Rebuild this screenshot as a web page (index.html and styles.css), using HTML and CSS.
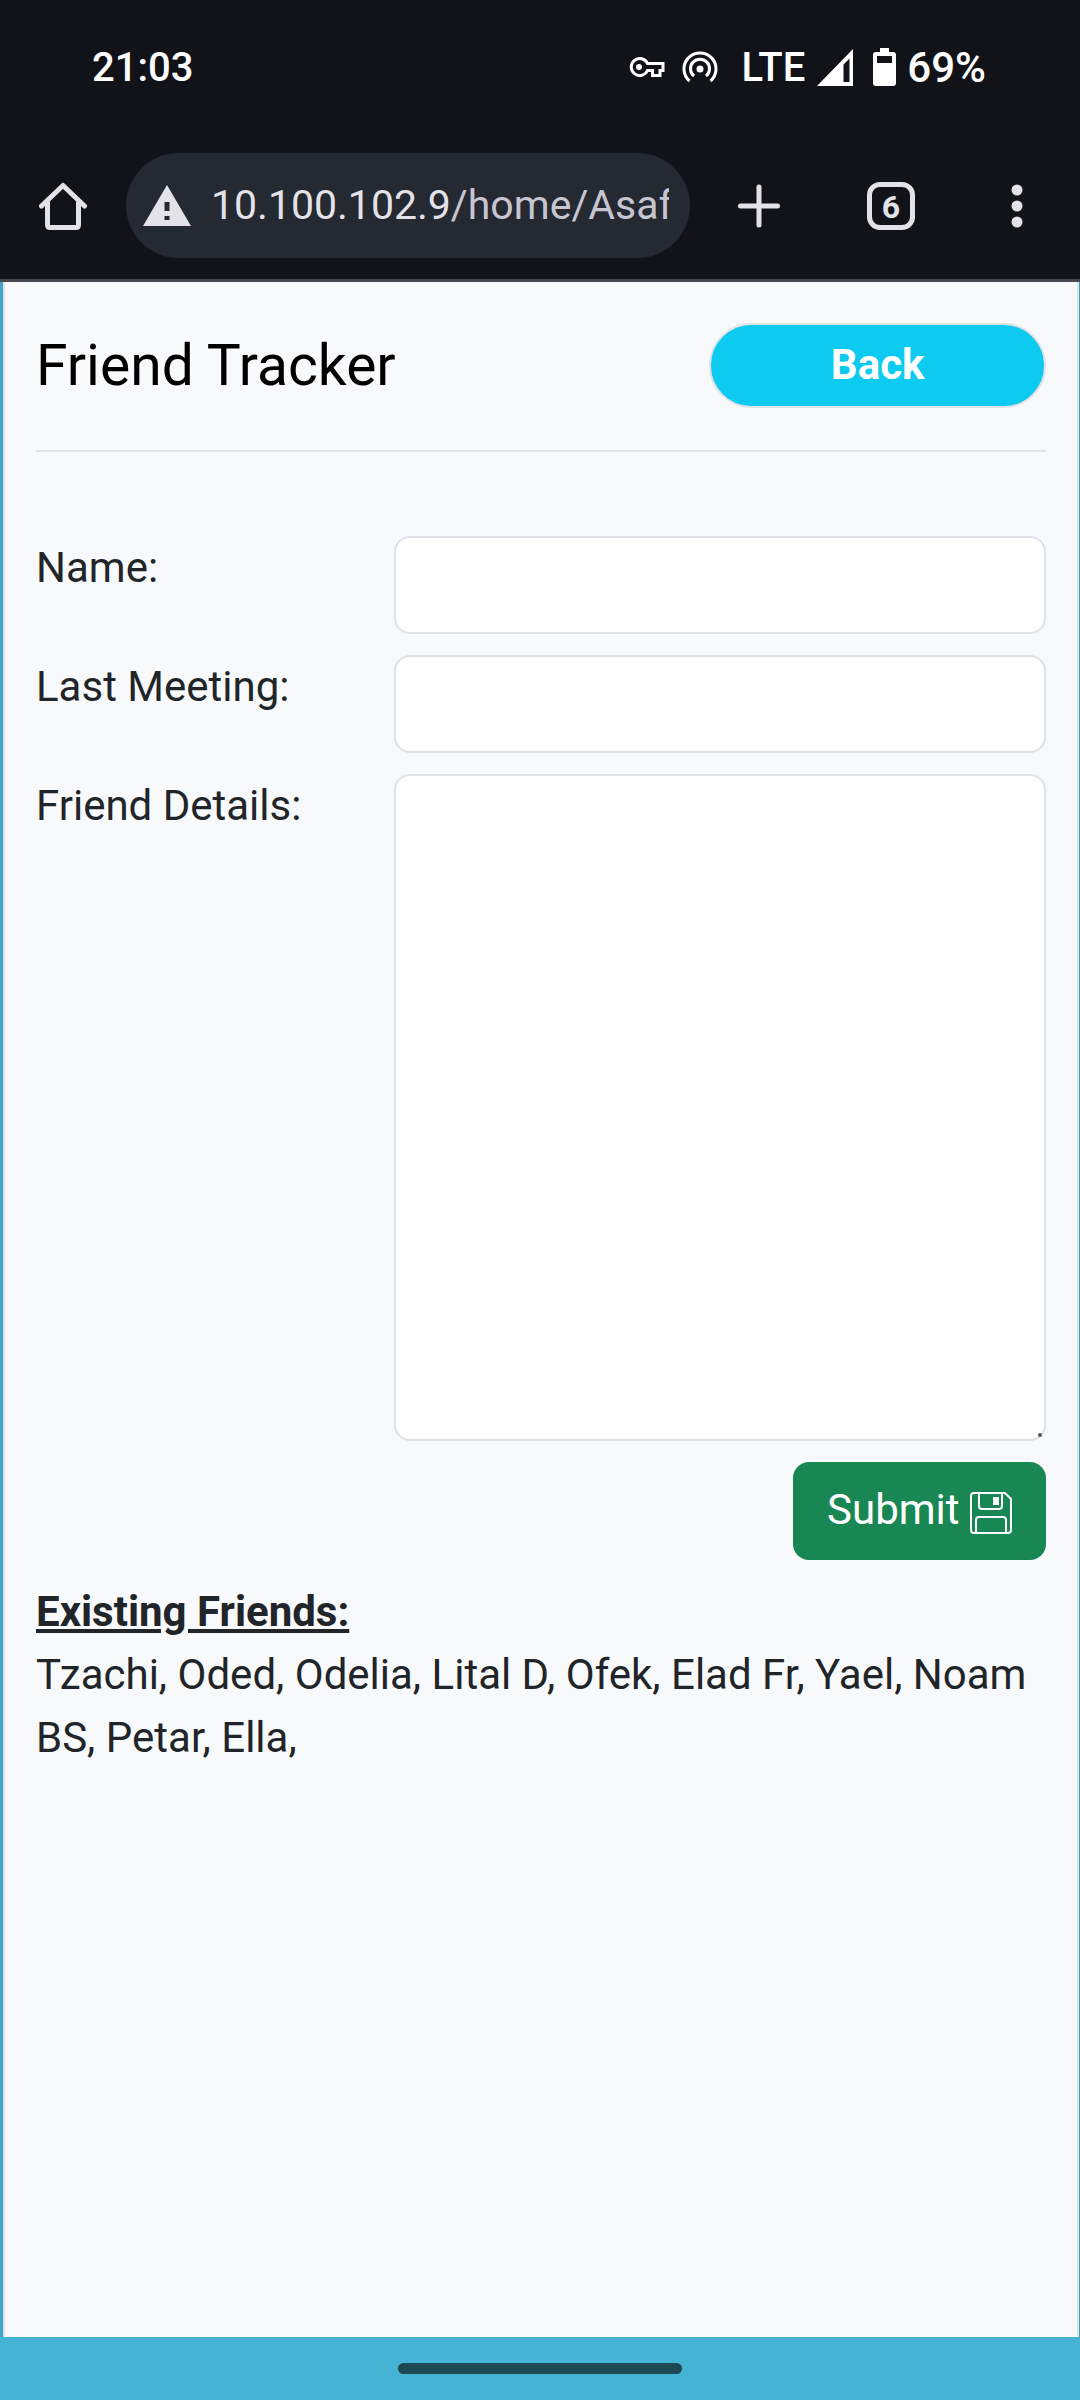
FILE: index.html
```html
<!DOCTYPE html>
<html lang="en">
<head>
<meta charset="utf-8">
<meta name="viewport" content="width=device-width, initial-scale=1">
<title>Friend Tracker</title>
<link rel="stylesheet" href="styles.css">
</head>
<body>
<div class="status-bar">
  <span class="status-time">21:03</span>
  <div class="status-icons">
    <svg class="icon-key" width="36" height="20" viewBox="0 0 36 20" fill="none" stroke="#fff" stroke-width="3"><path d="M18.500 6.500H34V13.500H31V18.500H23.500V13.500H18.500A8.500 8.500 0 1 1 18.500 6.500Z"/><circle cx="10" cy="10" r="3" fill="#fff" stroke="none"/></svg>
    <svg class="icon-hotspot" width="36" height="32" viewBox="0 0 36 32" fill="none" stroke="#fff" stroke-width="3"><path d="M7.500 30A16 16 0 1 1 28.500 30M12 25A9.500 9.500 0 1 1 24 25"/><circle cx="18" cy="18" r="3.500" fill="#fff" stroke="none"/></svg>
    <span class="status-lte">LTE</span>
    <svg class="icon-signal" width="36" height="37" viewBox="0 0 36 37"><path fill="#fff" fill-rule="evenodd" d="M36 0V37H0ZM32.500 9.500L26.500 15.500V33H32.500Z"/></svg>
    <svg class="icon-battery" width="23" height="38" viewBox="0 0 23 38"><path fill="#fff" fill-rule="evenodd" d="M7 0H16V4H20Q23 4 23 7V35Q23 38 20 38H3Q0 38 0 35V7Q0 4 3 4H7ZM4 8V15H19V8Z"/></svg>
    <span class="status-level">69%</span>
  </div>
</div>
<nav class="toolbar" aria-label="Browser">
  <button class="tool tool-home" type="button" aria-label="Home"><svg width="48" height="48" viewBox="0 0 48 48" fill="none" stroke="#e3e2e9" stroke-width="5" stroke-linecap="round" stroke-linejoin="round"><path d="M2.500 24L24 3.500L45.500 24M8.500 20V42.500Q8.500 45.500 11 45.500H37Q39.500 45.500 39.500 42.500V20"/></svg></button>
  <div class="address">
    <svg class="icon-warning" width="48" height="41" viewBox="0 0 48 41"><path fill="#e3e2e9" fill-rule="evenodd" d="M24 0L48 41H0ZM21.500 17V26H26.500V17ZM21.500 31V35H26.500V31Z"/></svg>
    <span class="url">10.100.102.9<span class="url-path">/home/Asaf</span></span>
  </div>
  <button class="tool tool-new" type="button" aria-label="New tab"><svg width="42" height="44" viewBox="0 0 42 44" stroke="#e3e2e9" stroke-width="5" stroke-linecap="round"><path d="M21 3V41M2.500 22H39.500"/></svg></button>
  <button class="tool" type="button" aria-label="Tabs"><span class="tab-count">6</span></button>
  <button class="tool" type="button" aria-label="Menu"><svg width="12" height="44" viewBox="0 0 12 44" fill="#e3e2e9"><circle cx="6" cy="6" r="5.500"/><circle cx="6" cy="22" r="5.500"/><circle cx="6" cy="38" r="5.500"/></svg></button>
</nav>
<main class="page">
  <header class="page-header">
    <h1 class="title">Friend Tracker</h1>
    <button class="back" type="button">Back</button>
  </header>
  <form class="form">
    <div class="row">
      <label class="label" for="name">Name:</label>
      <input class="field" id="name" type="text">
    </div>
    <div class="row">
      <label class="label" for="meeting">Last Meeting:</label>
      <input class="field" id="meeting" type="text">
    </div>
    <div class="row">
      <label class="label" for="details">Friend Details:</label>
      <div class="details-wrap">
        <textarea class="field details" id="details"></textarea>
        <span class="grip"></span>
      </div>
    </div>
    <button class="submit" type="submit">Submit <svg class="icon-save" width="42" height="42" viewBox="0 0 42 42" fill="none" stroke="#fff" stroke-width="2"><path d="M4 1H35L41 7V38Q41 41 38 41H4Q1 41 1 38V4Q1 1 4 1Z"/><path d="M9 1V14Q9 17 12 17H29Q32 17 32 14V1M6 41V28Q6 25 9 25H33Q36 25 36 28V41"/><path fill="#fff" stroke="none" d="M23 5H29V13H23Z"/></svg></button>
  </form>
  <section class="friends">
    <h2 class="friends-title">Existing Friends:</h2>
    <p class="friends-list">Tzachi, Oded, Odelia, Lital D, Ofek, Elad Fr, Yael, Noam BS, Petar, Ella,</p>
  </section>
</main>
<div class="gesture-bar"><span class="gesture-handle"></span></div>
</body>
</html>
```
FILE: styles.css
```css
*, *::before, *::after { box-sizing: border-box; }

body {
  margin: 0;
  min-height: 100vh;
  display: flex;
  flex-direction: column;
  background: #40a5c1;
  color: #212529;
  font: 42px/63px Roboto, "Noto Sans", sans-serif;
}

button, input, textarea { font: inherit; color: inherit; }
svg { flex: none; }

.status-bar {
  display: flex;
  justify-content: space-between;
  align-items: center;
  height: 132px;
  padding: 2px 94px 0 92px;
  background: #121318;
  color: #fff;
  font-size: 40px;
  font-weight: 500;
}
.status-icons { display: flex; align-items: center; }
.icon-hotspot { margin: 0 24px 0 17px; }
.icon-signal { margin-left: 12px; }
.icon-battery { margin: 0 11px 0 20px; }
.status-level { font-size: 42px; }

.toolbar {
  display: flex;
  align-items: center;
  padding: 21px 0;
  background: #121318;
  border-bottom: 3px solid #47464f;
}
.tool {
  display: flex;
  flex: none;
  align-items: center;
  justify-content: center;
  width: 126px;
  height: 105px;
  padding: 0;
  border: 0;
  background: none;
  color: #e3e2e9;
}
.tool-new { width: 138px; }
.address {
  display: flex;
  flex: 1;
  align-items: center;
  gap: 20px;
  min-width: 0;
  height: 105px;
  padding: 0 21px 0 17px;
  border-radius: 53px;
  background: #252932;
}
.url { flex: 1; overflow: hidden; white-space: nowrap; color: #e3e2e9; font-size: 41px; }
.url-path { color: #c6c5d0; }
.tab-count {
  width: 48px;
  height: 48px;
  border: 5px solid #e3e2e9;
  border-radius: 13px;
  font-size: 32px;
  font-weight: 700;
  line-height: 40px;
}

.page {
  flex: 1;
  margin: 0 1px 0 3px;
  padding: 41px 31px 42px;
  border: solid #dee2e6;
  border-width: 0 2px;
  background: #f8f9fb;
}
.page-header {
  display: flex;
  align-items: center;
  justify-content: space-between;
  margin-bottom: 84px;
  padding-bottom: 42px;
  border-bottom: 2px solid #dee2e6;
}
.title { margin: 0; color: #000; font-size: 57px; font-weight: 400; }
.back {
  width: calc(100% / 3);
  height: 85px;
  padding: 0 0 2px;
  border: 2px solid #dee2e6;
  border-radius: 43px;
  background: #0dcaf0;
  color: #fff;
  font-weight: 700;
}

.form { display: flex; flex-direction: column; gap: 21px; }
.row { display: flex; align-items: flex-start; gap: 21px; }
.label { flex: none; width: calc(100% / 3); }
.field {
  display: block;
  flex: 1;
  width: 100%;
  min-width: 0;
  height: 98px;
  padding: 16px 32px;
  border: 2px solid #dee2e6;
  border-radius: 16px;
  background: #fff;
}
.details-wrap { position: relative; flex: 1; }
.details { height: 667px; resize: none; }
.grip {
  position: absolute;
  right: 4px;
  bottom: 4px;
  width: 4px;
  height: 4px;
  border-radius: 2px;
  background: #555;
}
.submit {
  align-self: flex-end;
  height: 98px;
  padding: 0 34px 4px;
  border: 0;
  border-radius: 16px;
  background: #198754;
  color: #fff;
}
.icon-save { vertical-align: -10px; }

.friends { margin-top: 20px; }
.friends-title { margin: 0; font-size: 42px; font-weight: 700; text-decoration: underline; }
.friends-list { margin: 0; }

.gesture-bar {
  display: flex;
  align-items: center;
  justify-content: center;
  height: 63px;
  background: #45b3d3;
}
.gesture-handle { width: 284px; height: 11px; border-radius: 6px; background: #1d4854; }
```
